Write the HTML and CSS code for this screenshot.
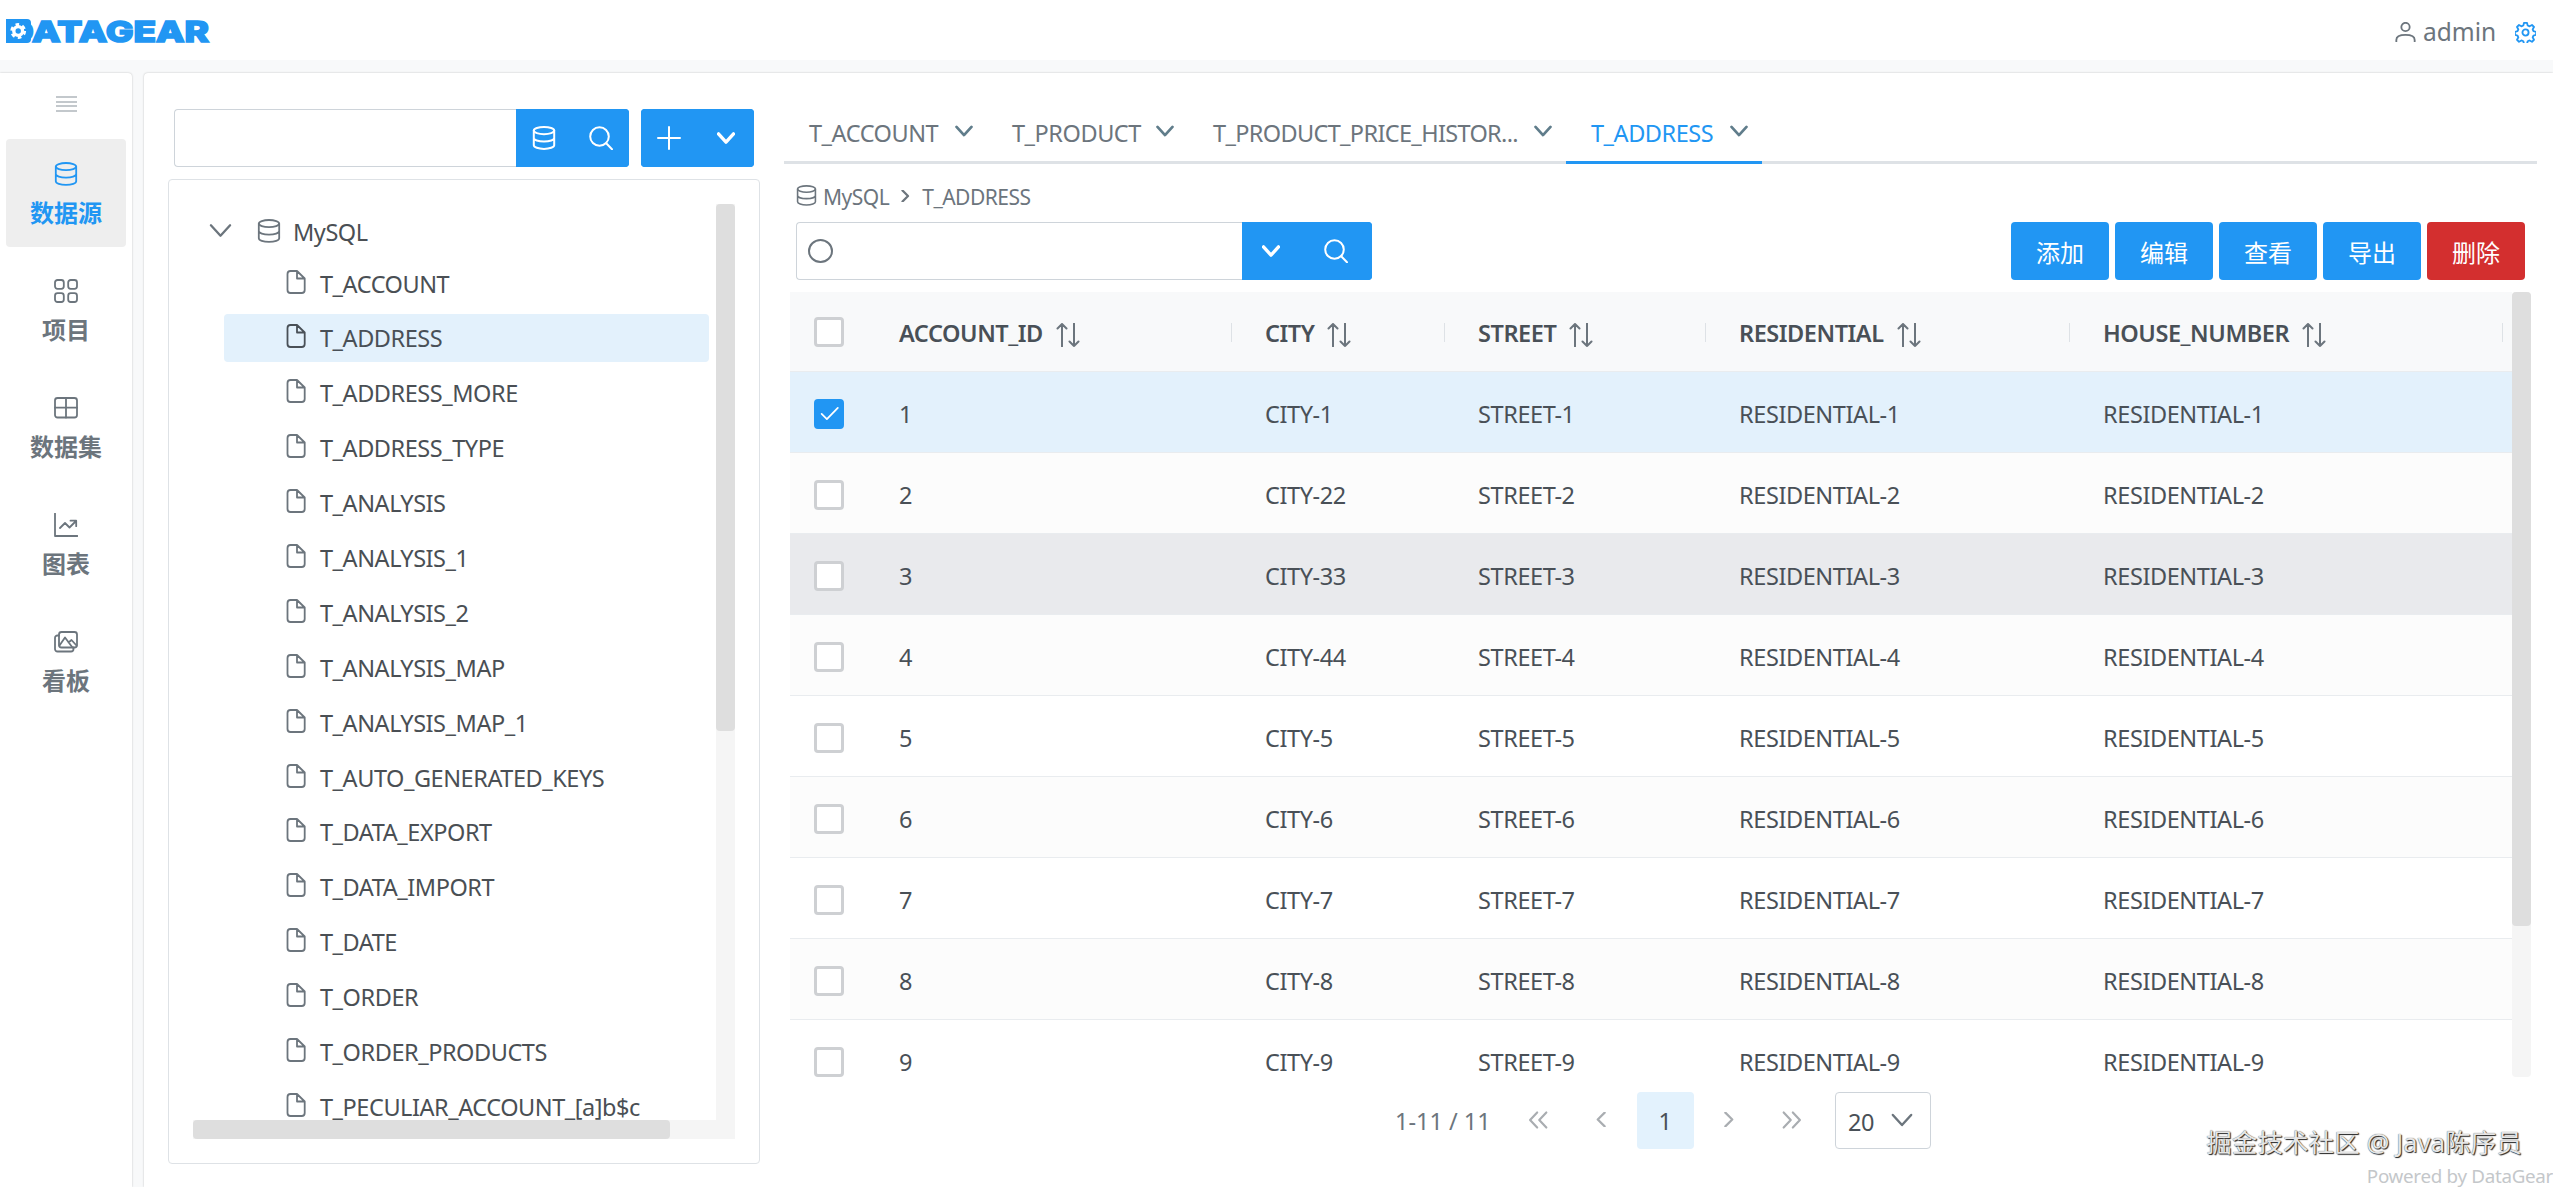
FILE: index.html
```html
<!DOCTYPE html>
<html lang="zh">
<head>
    <meta charset="UTF-8">
    <meta name="viewport" content="width=device-width, initial-scale=1.0">
    <title>DataGear</title>
    <link rel="stylesheet" href="styles.css">
</head>
<body>
    <!-- Icon sprite -->
    <svg class="sprite" aria-hidden="true">
        <symbol id="i-database" viewBox="0 0 24 24">
            <ellipse cx="12" cy="4.6" rx="10.2" ry="3.6"/>
            <path d="M1.8 4.6v14.6c0 2 4.5 3.7 10.2 3.7s10.2-1.7 10.2-3.7V4.6M1.8 12c0 2 4.5 3.6 10.2 3.6S22.200 14 22.200 12"/>
        </symbol>
        <symbol id="i-file" viewBox="0 0 24 24">
            <path d="M13 1H6.500A3 3 0 0 0 3.500 4v16a3 3 0 0 0 3 3h11.200a3 3 0 0 0 3-3V8.500zM13 1v7.500h7.700"/>
        </symbol>
        <symbol id="i-grid" viewBox="0 0 24 24">
            <rect x="1" y="1" width="8.800" height="8.800" rx="2.500"/>
            <rect x="14.200" y="1" width="8.800" height="8.800" rx="2.500"/>
            <rect x="1" y="14.200" width="8.800" height="8.800" rx="2.500"/>
            <rect x="14.200" y="14.200" width="8.800" height="8.800" rx="2.500"/>
        </symbol>
        <symbol id="i-table" viewBox="0 0 24 24">
            <rect x="1" y="2" width="22" height="19.500" rx="2.500"/>
            <path d="M12 2v19.500M1 11.700h22"/>
        </symbol>
        <symbol id="i-chart" viewBox="0 0 24 24">
            <path d="M1 .500V23h22.500M6 15l5-5 4.500 4.500L22 8M16.500 7.700h5.700v5.500"/>
        </symbol>
        <symbol id="i-images" viewBox="0 0 24 24">
            <rect x="5" y="2" width="18" height="15.500" rx="2.500"/>
            <path d="M5 5.500H3.500A2.500 2.500 0 0 0 1 8v11a2.500 2.500 0 0 0 2.500 2.500H17a2.500 2.500 0 0 0 2.500-2.500v-1.500M5.500 15.500L11 7.500l7.500 10M14.500 12.500l3-2.500 5 5.500"/>
        </symbol>
        <symbol id="i-search" viewBox="0 0 24 24">
            <circle cx="10.500" cy="10.500" r="9.300"/>
            <path d="M17.200 17.200L23 23.200"/>
        </symbol>
        <symbol id="i-plus" viewBox="0 0 24 24"><path d="M12 1v22M1 12h22"/></symbol>
        <symbol id="i-down" viewBox="0 0 24 24"><path d="M2 6.500l10 11 10-11"/></symbol>
        <symbol id="i-right" viewBox="0 0 24 24"><path d="M7 1l11 11L7 23"/></symbol>
        <symbol id="i-left" viewBox="0 0 24 24"><path d="M17 1L6 12l11 11"/></symbol>
        <symbol id="i-dright" viewBox="0 0 24 24"><path d="M2 3l8.500 9L2 21M13 3l8.500 9-8.500 9"/></symbol>
        <symbol id="i-dleft" viewBox="0 0 24 24"><path d="M11 3l-8.500 9L11 21M22 3l-8.500 9 8.500 9"/></symbol>
        <symbol id="i-sort" viewBox="0 0 24 24"><path d="M6 23.500V1M1.500 5.500L6 1l4.500 4.500M18 .500V23M13.500 18.500L18 23l4.500-4.500"/></symbol>
        <symbol id="i-check" viewBox="0 0 24 24"><path d="M3 12.500l6 6L21.500 5.500"/></symbol>
        <symbol id="i-user" viewBox="0 0 24 24">
            <circle cx="12" cy="6" r="5"/>
            <path d="M1 23.500v-2c0-4 5-6 11-6s11 2 11 6v2"/>
        </symbol>
        <symbol id="i-cog" viewBox="0 0 24 24">
            <circle cx="12" cy="12" r="3.500"/>
            <path d="M10.300 1h3.400l.8 3 2.200.9 2.700-1.500 2.300 2.300-1.500 2.700.9 2.100 3 .8v3.400l-3 .8-.9 2.100 1.500 2.700-2.300 2.300-2.700-1.500-2.200.9-.8 3h-3.400l-.8-3-2.200-.9-2.700 1.500-2.300-2.300 1.500-2.700-.9-2.100-3-.8v-3.400l3-.8.9-2.100-1.500-2.700 2.300-2.300 2.700 1.500 2.200-.9z"/>
        </symbol>
    </svg>

    <header class="header">
        <svg class="logo" viewBox="0 0 204 24">
            <text class="logo-text" x="1" y="22.500" textLength="202" lengthAdjust="spacingAndGlyphs">DATAGEAR</text>
            <rect class="logo-block" x="0" y="0" width="25" height="24" rx="4"/>
            <rect class="logo-block" x="0" y="0" width="10" height="24"/>
            <circle class="logo-teeth" cx="12.200" cy="12" r="6.400"/>
            <circle class="logo-ring" cx="12.200" cy="12" r="4.400"/>
        </svg>
        <div class="user">
            <svg class="icon icon-user"><use href="#i-user"/></svg>
            <span class="user-name">admin</span>
            <svg class="icon icon-cog"><use href="#i-cog"/></svg>
        </div>
    </header>

    <div class="body">
        <nav class="sidebar">
            <div class="burger"><i></i><i></i><i></i><i></i></div>
            <a class="nav-item active"><svg class="icon"><use href="#i-database"/></svg><span>数据源</span></a>
            <a class="nav-item"><svg class="icon"><use href="#i-grid"/></svg><span>项目</span></a>
            <a class="nav-item"><svg class="icon"><use href="#i-table"/></svg><span>数据集</span></a>
            <a class="nav-item"><svg class="icon"><use href="#i-chart"/></svg><span>图表</span></a>
            <a class="nav-item"><svg class="icon"><use href="#i-images"/></svg><span>看板</span></a>
        </nav>

        <main class="main">
            <!-- Schema tree -->
            <section class="left">
                <div class="left-bar">
                    <div class="input"></div>
                    <div class="btn-group">
                        <button><svg class="icon"><use href="#i-database"/></svg></button>
                        <button><svg class="icon"><use href="#i-search"/></svg></button>
                    </div>
                    <div class="btn-group second">
                        <button><svg class="icon"><use href="#i-plus"/></svg></button>
                        <button><svg class="icon icon-chev"><use href="#i-down"/></svg></button>
                    </div>
                </div>
                <div class="tree-panel">
                    <div class="tree">
                        <div class="tree-root">
                            <svg class="icon toggler"><use href="#i-down"/></svg>
                            <svg class="icon"><use href="#i-database"/></svg>
                            <span>MySQL</span>
                        </div>
                        <ul class="tree-list">
                            <li><svg class="icon"><use href="#i-file"/></svg>T_ACCOUNT</li>
                            <li class="selected"><svg class="icon"><use href="#i-file"/></svg>T_ADDRESS</li>
                            <li><svg class="icon"><use href="#i-file"/></svg>T_ADDRESS_MORE</li>
                            <li><svg class="icon"><use href="#i-file"/></svg>T_ADDRESS_TYPE</li>
                            <li><svg class="icon"><use href="#i-file"/></svg>T_ANALYSIS</li>
                            <li><svg class="icon"><use href="#i-file"/></svg>T_ANALYSIS_1</li>
                            <li><svg class="icon"><use href="#i-file"/></svg>T_ANALYSIS_2</li>
                            <li><svg class="icon"><use href="#i-file"/></svg>T_ANALYSIS_MAP</li>
                            <li><svg class="icon"><use href="#i-file"/></svg>T_ANALYSIS_MAP_1</li>
                            <li><svg class="icon"><use href="#i-file"/></svg>T_AUTO_GENERATED_KEYS</li>
                            <li><svg class="icon"><use href="#i-file"/></svg>T_DATA_EXPORT</li>
                            <li><svg class="icon"><use href="#i-file"/></svg>T_DATA_IMPORT</li>
                            <li><svg class="icon"><use href="#i-file"/></svg>T_DATE</li>
                            <li><svg class="icon"><use href="#i-file"/></svg>T_ORDER</li>
                            <li><svg class="icon"><use href="#i-file"/></svg>T_ORDER_PRODUCTS</li>
                            <li><svg class="icon"><use href="#i-file"/></svg>T_PECULIAR_ACCOUNT_[a]b$c</li>
                        </ul>
                    </div>
                    <div class="vbar"><div class="thumb"></div></div>
                    <div class="hbar"><div class="thumb"></div></div>
                </div>
            </section>

            <!-- Table data -->
            <section class="right">
                <div class="tabs">
                    <div class="tab tab-account"><span>T_ACCOUNT</span><svg class="icon icon-chev"><use href="#i-down"/></svg></div>
                    <div class="tab tab-product"><span>T_PRODUCT</span><svg class="icon icon-chev"><use href="#i-down"/></svg></div>
                    <div class="tab tab-history"><span>T_PRODUCT_PRICE_HISTOR...</span><svg class="icon icon-chev"><use href="#i-down"/></svg></div>
                    <div class="tab tab-address active"><span>T_ADDRESS</span><svg class="icon icon-chev"><use href="#i-down"/></svg></div>
                </div>
                <div class="breadcrumb">
                    <svg class="icon"><use href="#i-database"/></svg>
                    <span>MySQL</span>
                    <svg class="icon sep"><use href="#i-right"/></svg>
                    <span>T_ADDRESS</span>
                </div>
                <div class="toolbar">
                    <div class="input search-input"><i class="ring"></i></div>
                    <div class="btn-group search-group">
                        <button><svg class="icon icon-chev"><use href="#i-down"/></svg></button>
                        <button><svg class="icon"><use href="#i-search"/></svg></button>
                    </div>
                    <div class="actions">
                        <button>添加</button>
                        <button>编辑</button>
                        <button>查看</button>
                        <button>导出</button>
                        <button class="danger">删除</button>
                    </div>
                </div>
                <div class="table-wrap">
                    <div class="table">
                        <div class="row head">
                            <div class="check"><i class="box"></i></div>
                            <div class="th"><span>ACCOUNT_ID</span><svg class="icon"><use href="#i-sort"/></svg></div>
                            <div class="th"><span>CITY</span><svg class="icon"><use href="#i-sort"/></svg></div>
                            <div class="th"><span>STREET</span><svg class="icon"><use href="#i-sort"/></svg></div>
                            <div class="th"><span>RESIDENTIAL</span><svg class="icon"><use href="#i-sort"/></svg></div>
                            <div class="th"><span>HOUSE_NUMBER</span><svg class="icon"><use href="#i-sort"/></svg></div>
                        </div>
                        <div class="row selected"><div class="check"><i class="box checked"><svg class="icon"><use href="#i-check"/></svg></i></div><div>1</div><div>CITY-1</div><div>STREET-1</div><div>RESIDENTIAL-1</div><div>RESIDENTIAL-1</div></div>
                        <div class="row"><div class="check"><i class="box"></i></div><div>2</div><div>CITY-22</div><div>STREET-2</div><div>RESIDENTIAL-2</div><div>RESIDENTIAL-2</div></div>
                        <div class="row hover"><div class="check"><i class="box"></i></div><div>3</div><div>CITY-33</div><div>STREET-3</div><div>RESIDENTIAL-3</div><div>RESIDENTIAL-3</div></div>
                        <div class="row"><div class="check"><i class="box"></i></div><div>4</div><div>CITY-44</div><div>STREET-4</div><div>RESIDENTIAL-4</div><div>RESIDENTIAL-4</div></div>
                        <div class="row"><div class="check"><i class="box"></i></div><div>5</div><div>CITY-5</div><div>STREET-5</div><div>RESIDENTIAL-5</div><div>RESIDENTIAL-5</div></div>
                        <div class="row"><div class="check"><i class="box"></i></div><div>6</div><div>CITY-6</div><div>STREET-6</div><div>RESIDENTIAL-6</div><div>RESIDENTIAL-6</div></div>
                        <div class="row"><div class="check"><i class="box"></i></div><div>7</div><div>CITY-7</div><div>STREET-7</div><div>RESIDENTIAL-7</div><div>RESIDENTIAL-7</div></div>
                        <div class="row"><div class="check"><i class="box"></i></div><div>8</div><div>CITY-8</div><div>STREET-8</div><div>RESIDENTIAL-8</div><div>RESIDENTIAL-8</div></div>
                        <div class="row"><div class="check"><i class="box"></i></div><div>9</div><div>CITY-9</div><div>STREET-9</div><div>RESIDENTIAL-9</div><div>RESIDENTIAL-9</div></div>
                    </div>
                    <div class="vbar"><div class="thumb"></div></div>
                </div>
                <div class="pager">
                    <span class="pager-info">1-11 / 11</span>
                    <a><svg class="icon"><use href="#i-dleft"/></svg></a>
                    <a><svg class="icon small"><use href="#i-left"/></svg></a>
                    <a class="current">1</a>
                    <a><svg class="icon small"><use href="#i-right"/></svg></a>
                    <a><svg class="icon"><use href="#i-dright"/></svg></a>
                    <div class="page-size"><span>20</span><svg class="icon"><use href="#i-down"/></svg></div>
                </div>
            </section>
        </main>
    </div>

    <div class="watermark">掘金技术社区 @ Java陈序员</div>
    <div class="powered">Powered by DataGear</div>
</body>
</html>
```
FILE: styles.css
```css
* {
    margin: 0;
    padding: 0;
    box-sizing: border-box;
}

body {
    height: 1187px;
    overflow: hidden;
    position: relative;
    font-family: "Noto Sans", "Noto Sans CJK SC", sans-serif;
    font-size: 23.5px;
    letter-spacing: -0.45px;
    line-height: 32px;
    color: #495057;
    background-color: #f8f9fa;
}

button {
    border: 0;
    font: inherit;
    letter-spacing: 0;
    color: #ffffff;
    background-color: #2196f3;
}

.sprite {
    display: none;
}

.icon {
    width: 24px;
    height: 24px;
    flex: none;
    fill: none;
    stroke: currentColor;
    stroke-width: 1.8;
    stroke-linecap: round;
    stroke-linejoin: round;
    overflow: visible;
}

.icon-chev {
    width: 18px;
    height: 18px;
    stroke-width: 3.6;
}

/* Header */
.header {
    height: 60px;
    display: flex;
    justify-content: space-between;
    padding: 0 17px 0 6px;
    background-color: #ffffff;
}

.logo {
    width: 204px;
    height: 24px;
    margin-top: 19px;
    overflow: visible;
}

.logo-text {
    font-family: Inter, sans-serif;
    font-size: 29px;
    font-weight: 800;
    letter-spacing: 0;
    fill: #2196f3;
    stroke: #2196f3;
    stroke-width: 1.6;
}

.logo-block {
    fill: #2196f3;
}

.logo-teeth {
    fill: none;
    stroke: #ffffff;
    stroke-width: 3;
    stroke-dasharray: 3.5 3.202;
}

.logo-ring {
    fill: none;
    stroke: #ffffff;
    stroke-width: 3.4;
}

.user {
    height: 64px;
    display: flex;
    align-items: center;
    color: #6c757d;
}

.icon-user {
    width: 21px;
    height: 20px;
    stroke-width: 2.2;
}

.user-name {
    width: 99px;
    padding-left: 7px;
    font-size: 24.5px;
    letter-spacing: 0;
}

.icon-cog {
    width: 21px;
    height: 21px;
    color: #2196f3;
    stroke-width: 2.1;
}

.body {
    height: 1127px;
    padding-top: 13px;
    display: flex;
    gap: 12px;
}

/* Sidebar */
.sidebar {
    width: 132px;
    padding: 23px 6px 0;
    display: flex;
    flex-direction: column;
    align-items: center;
    background-color: #ffffff;
    border-radius: 0 4px 0 0;
    box-shadow: 0 0 2px rgba(0, 0, 0, 0.25);
}

.burger {
    width: 21px;
    height: 16px;
    margin-bottom: 27px;
    display: flex;
    flex-direction: column;
    justify-content: space-between;
}

.burger i {
    height: 2px;
    background-color: #c3c8cc;
}

.nav-item {
    width: 120px;
    height: 108px;
    margin-bottom: 9px;
    padding-top: 23px;
    display: flex;
    flex-direction: column;
    align-items: center;
    font-size: 24px;
    font-weight: 700;
    letter-spacing: 0;
    color: #6c757d;
    border-radius: 4px;
}

.nav-item span {
    margin-top: 11px;
}

.nav-item.active {
    color: #2196f3;
    background-color: #eeeeee;
}

.main {
    flex: 1;
    display: flex;
    padding: 0 16px 0 24px;
    background-color: #ffffff;
    border-radius: 4px 0 0 0;
    box-shadow: 0 0 2px rgba(0, 0, 0, 0.25);
}

/* Tree column */
.left {
    width: 592px;
    padding-top: 36px;
}

.left-bar {
    height: 58px;
    padding: 0 6px;
    display: flex;
}

.input {
    flex: 1;
    border: 1px solid #ced4da;
    border-right: 0;
    border-radius: 4px 0 0 4px;
}

.btn-group {
    width: 113px;
    display: flex;
    background-color: #2196f3;
    border-radius: 0 4px 4px 0;
    overflow: hidden;
}

.btn-group.second {
    margin-left: 12px;
    border-radius: 4px;
}

.btn-group button {
    flex: 1;
    display: flex;
    align-items: center;
    justify-content: center;
}

.btn-group .icon {
    margin-top: -1px;
    stroke-width: 2;
}

.btn-group .icon-chev {
    stroke-width: 4.5;
}

.tree-panel {
    height: 985px;
    margin-top: 12px;
    padding: 24px;
    display: grid;
    grid-template-columns: 523px 19px;
    grid-template-rows: 916px 19px;
    border: 1px solid #dee2e6;
    border-radius: 4px;
}

.tree {
    overflow: hidden;
    color: #4a4f54;
}

.tree-root {
    height: 55px;
    padding-left: 16px;
    display: flex;
    align-items: center;
}

.tree-root .icon {
    margin: -2px 12px 0 -1px;
    color: #6c757d;
}

.tree-root .toggler {
    width: 23px;
    height: 23px;
    margin: -2px 26px 0 0;
    stroke-width: 2.4;
}

.tree-list {
    padding-left: 31px;
    list-style: none;
}

.tree-list li {
    width: 485px;
    height: 48px;
    margin-bottom: 6.9px;
    padding: 1px 0 0 60px;
    display: flex;
    align-items: center;
    white-space: nowrap;
    border-radius: 4px;
}

.tree-list .icon {
    margin: -4px 12px 0 0;
    color: #6c757d;
}

.tree-list .selected,
.tree-list .selected .icon {
    color: #495057;
    background-color: #e3f1fc;
}

.vbar,
.hbar {
    background-color: #f5f5f5;
}

.thumb {
    background-color: #dedede;
    border-radius: 4px;
}

.tree-panel .vbar .thumb {
    height: 527px;
}

.tree-panel .hbar {
    grid-column: 1 / 3;
}

.hbar .thumb {
    width: 477px;
    height: 19px;
}

/* Data column */
.right {
    flex: 1;
    margin-left: 24px;
    padding-top: 28px;
}

.tabs {
    height: 63px;
    display: flex;
    border-bottom: 3px solid #dee2e6;
}

.tab {
    height: 63px;
    padding: 1px 14px 0 25px;
    display: flex;
    align-items: center;
    justify-content: space-between;
    color: #6c757d;
    border-bottom: 3px solid transparent;
}

.tab span {
    margin-top: 2px;
    letter-spacing: -0.45px;
}

.tab .icon {
    margin-top: -1px;
    color: #607d8b;
}

.tab-account {
    width: 203px;
}

.tab-product {
    width: 201px;
}

.tab-history {
    width: 378px;
}

.tab-history span {
    letter-spacing: -0.65px;
}

.tab-address {
    width: 196px;
}

.tab.active {
    color: #2196f3;
    border-bottom-color: #2196f3;
}

.breadcrumb {
    height: 58px;
    padding: 8px 0 0 12px;
    display: flex;
    align-items: center;
    font-size: 21px;
    letter-spacing: -0.5px;
    color: #6c757d;
}

.breadcrumb .icon {
    width: 21px;
    height: 21px;
    margin: -4px 6px 0 0;
}

.breadcrumb .sep {
    width: 12px;
    height: 12px;
    margin: -2px 11px 0 10px;
    stroke-width: 4.5;
}

.toolbar {
    height: 58px;
    padding: 0 12px;
    display: flex;
}

.search-input {
    flex: none;
    width: 446px;
    padding: 16px 11px;
}

.ring {
    display: block;
    width: 25px;
    height: 24px;
    border: 2px solid #6c757d;
    border-radius: 50%;
}

.search-group {
    width: 130px;
}

.search-group .icon {
    margin-left: -8px;
}

.actions {
    margin-left: auto;
    display: flex;
    gap: 6px;
}

.actions button {
    width: 98px;
    padding-top: 4px;
    font-size: 24px;
    border-radius: 4px;
}

.actions .danger {
    background-color: #d32f2f;
}

.table-wrap {
    height: 785px;
    margin: 12px 6px 0;
    display: flex;
    overflow: hidden;
}

.table {
    width: 1722px;
}

.row {
    height: 81px;
    padding-top: 4px;
    display: grid;
    grid-template-columns: 85px 366px 213px 261px 364px 433px;
    align-items: center;
    letter-spacing: -0.4px;
    border-bottom: 1px solid #e9ecef;
}

.row > div {
    padding-left: 24px;
}

.row:nth-child(odd) {
    background-color: #fcfcfc;
}

.row.head {
    height: 80px;
    padding-top: 2px;
    font-weight: 600;
    letter-spacing: -0.45px;
    background-color: #f8f9fa;
}

.row.selected {
    background-color: #e3f1fc;
}

.row.hover {
    background-color: #e9eaed;
}

.th {
    display: flex;
    align-items: center;
}

.th .icon {
    margin: 5px 0 0 13px;
    color: #6c757d;
    stroke-width: 2;
}

/* column resizer */
.th::after {
    content: "";
    width: 1px;
    height: 19px;
    margin: 0 9px 0 auto;
    background-color: #dee2e6;
}

.box {
    display: block;
    width: 30px;
    height: 30px;
    margin-top: -1px;
    background-color: #ffffff;
    border: 3px solid #ced0d3;
    border-radius: 4px;
}

.box.checked {
    display: flex;
    align-items: center;
    justify-content: center;
    color: #ffffff;
    background-color: #2196f3;
    border-color: #2196f3;
}

.box .icon {
    width: 21px;
    height: 21px;
    stroke-width: 2;
}

.table-wrap .vbar {
    width: 19px;
    border-radius: 4px;
}

.table-wrap .thumb {
    height: 634px;
}

/* Paginator */
.pager {
    height: 57px;
    margin-top: 15px;
    padding-left: 611px;
    display: flex;
    gap: 6.5px;
    color: #6c757d;
}

.pager-info {
    width: 108px;
    line-height: 58px;
    letter-spacing: 0;
    white-space: nowrap;
}

.pager a {
    width: 57px;
    display: flex;
    align-items: center;
    justify-content: center;
    border-radius: 4px;
}

.pager a .icon {
    width: 20px;
    height: 20px;
    margin-top: -2px;
    color: #a9adb1;
    stroke-width: 2.6;
}

.pager a .icon.small {
    width: 15px;
    height: 15px;
    stroke-width: 3.6;
}

.pager .current {
    color: #495057;
    background-color: #e3f2fd;
}

.page-size {
    width: 96px;
    margin-left: 8px;
    padding: 2px 17px 0 12px;
    display: flex;
    align-items: center;
    justify-content: space-between;
    color: #495057;
    border: 1px solid #ced4da;
    border-radius: 4px;
}

.page-size .icon {
    width: 22px;
    height: 22px;
    margin-top: -3px;
    color: #6c757d;
    stroke-width: 2.6;
}

.watermark {
    position: absolute;
    right: 31px;
    bottom: 29px;
    font-size: 25.5px;
    letter-spacing: 0.1px;
    white-space: nowrap;
    color: #e6e6e6;
    text-shadow: 1px 1px 1px #222222, 0 0 1px #444444;
}

.powered {
    position: absolute;
    right: 0;
    bottom: -5px;
    font-size: 18.8px;
    letter-spacing: -0.3px;
    white-space: nowrap;
    color: #c4c7ca;
}
```
